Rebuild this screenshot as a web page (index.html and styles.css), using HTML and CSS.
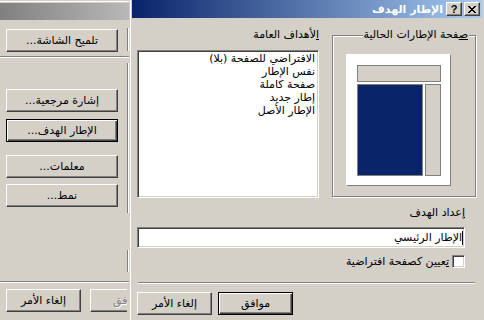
FILE: index.html
```html
<!DOCTYPE html>
<html lang="ar">
<head>
    <meta charset="UTF-8">
    <title>الإطار الهدف</title>
    <link rel="stylesheet" href="styles.css">
</head>
<body>
    <div class="desk">
        <!-- dialog behind -->
        <div class="back-win">
            <div class="back-title"></div>
            <div class="back-body">
                <div class="back-col">
                    <button class="btn bbtn b1">تلميح الشاشة...</button>
                    <div class="sep sep1"></div>
                    <button class="btn bbtn b2">إشارة مرجعية...</button>
                    <button class="btn btn-default bbtn b3">الإطار الهدف...</button>
                    <button class="btn bbtn b4">معلمات...</button>
                    <button class="btn bbtn b5">نمط...</button>
                    <div class="sep sep2"></div>
                    <div class="back-actions">
                        <button class="btn abtn">إلغاء الأمر</button>
                        <button class="btn abtn muted">موافق</button>
                    </div>
                </div>
                <div class="back-edge">
                    <div class="edge-seg e1"></div>
                    <div class="edge-sep s1"></div>
                    <div class="edge-seg e2"></div>
                    <div class="edge-seg e3"></div>
                    <div class="edge-sep s2"></div>
                </div>
            </div>
        </div>

        <!-- target frame dialog -->
        <div class="front-win">
            <div class="front-title">
                <span class="tbtn">
                    <svg width="8" height="7" viewBox="0 0 8 7" shape-rendering="crispEdges">
                        <path d="M0 0h2v1H0zM6 0h2v1H6zM1 1h2v1H1zM5 1h2v1H5zM2 2h4v1H2zM3 3h2v1H3zM2 4h4v1H2zM1 5h2v1H1zM5 5h2v1H5zM0 6h2v1H0zM6 6h2v1H6z" fill="#000"/>
                    </svg>
                </span>
                <span class="tbtn help">?</span>
                <span class="title-text">الإطار الهدف</span>
            </div>

            <div class="front-body">
                <div class="top">
                    <div class="group">
                        <div class="group-title"><u>ص</u>فحة الإطارات الحالية</div>
                        <div class="group-box">
                            <div class="page">
                                <div class="pg-top"></div>
                                <div class="pg-row">
                                    <div class="pg-main"></div>
                                    <div class="pg-side"></div>
                                </div>
                            </div>
                        </div>
                    </div>

                    <div class="targets">
                        <div class="lbl"><u>ا</u>لأهداف العامة</div>
                        <div class="listbox">
                            <div>الافتراضي للصفحة (بلا)</div>
                            <div>نفس الإطار</div>
                            <div>صفحة كاملة</div>
                            <div>إطار جديد</div>
                            <div>الإطار الأصل</div>
                        </div>
                    </div>
                </div>

                <div class="setting">
                    <div class="lbl"><u>إ</u>عداد الهدف</div>
                    <div class="input"><span class="caret"></span>الإطار الرئيسي</div>
                    <div class="check-row">
                        <span class="check"></span>
                        <span><u>ت</u>عيين كصفحة افتراضية</span>
                    </div>
                </div>

                <div class="sep front-sep"></div>

                <div class="actions">
                    <button class="btn btn-default abtn">موافق</button>
                    <button class="btn abtn">إلغاء الأمر</button>
                </div>
            </div>
        </div>
    </div>
</body>
</html>
```

FILE: styles.css
```css
/* Reset */
* {
    margin: 0;
    padding: 0;
    box-sizing: border-box;
}

html, body {
    width: 484px;
    height: 320px;
    overflow: hidden;
}

body {
    background: #d4d0c8;
    color: #000;
    font-family: "DejaVu Sans", sans-serif;
    font-size: 11px;
    line-height: 13px;
}

u {
    text-decoration: underline;
}

.desk {
    display: flex;
    direction: ltr;
    height: 320px;
}

/* classic 3d button */
.btn {
    display: flex;
    align-items: center;
    justify-content: center;
    direction: rtl;
    height: 23px;
    background: #d4d0c8;
    border: 1px solid;
    border-color: #fff #404040 #404040 #fff;
    box-shadow: inset -1px -1px #808080;
    font: inherit;
    color: #000;
    flex: none;
}

.btn-default {
    border: 1px solid #000;
    box-shadow: inset 1px 1px #fff, inset -1px -1px #404040, inset -2px -2px #808080;
}

.abtn {
    width: 75px;
}

.sep {
    height: 2px;
    border-top: 1px solid #808080;
    border-bottom: 1px solid #fff;
}

/* back dialog */
.back-win {
    width: 129px;
    flex: none;
    padding-top: 3px;
    box-shadow: inset 0 1px #d4d0c8, inset 0 2px #fff;
    overflow: hidden;
}

.back-title {
    height: 17px;
    background: linear-gradient(to right, #808080, #b8b8b8);
}

.back-body {
    display: flex;
}

.back-col {
    width: 127px;
    display: flex;
    flex-direction: column;
    overflow: hidden;
}

.bbtn {
    width: 112px;
    margin-left: 6px;
}

.b1 { margin-top: 9px; }
.sep1 { margin-top: 4px; }
.b2 { margin-top: 31px; }
.b3 { margin-top: 7px; }
.b4 { margin-top: 13px; }
.b5 { margin-top: 6px; }
.sep2 { margin-top: 74px; }

.back-actions {
    display: flex;
    gap: 9px;
    margin-top: 6px;
    padding-left: 6px;
}

.muted {
    color: #808080;
    text-shadow: 1px 1px #fff;
}

.back-edge {
    width: 2px;
    display: flex;
    flex-direction: column;
}

.edge-seg {
    border-left: 1px solid #808080;
    border-right: 1px solid #fff;
}

.edge-sep {
    height: 2px;
    border-top: 1px solid #808080;
    border-bottom: 1px solid #fff;
}

.e1 { margin-top: 8px; height: 23px; }
.s1 { margin-top: 5px; }
.e2 { margin-top: 5px; height: 150px; }
.e3 { margin-top: 37px; height: 22px; }
.s2 { margin-top: 9px; }

/* front dialog */
.front-win {
    width: 355px;
    flex: none;
    direction: rtl;
    border-left: 1px solid #d4d0c8;
    box-shadow: inset 1px 0 #fff;
    padding: 0 2px;
}

.front-title {
    height: 18px;
    display: flex;
    align-items: center;
    padding-right: 2px;
    background: linear-gradient(to right, #0a246a, #a6caf0);
    color: #fff;
    font-weight: bold;
}

.tbtn {
    width: 16px;
    height: 14px;
    display: flex;
    align-items: center;
    justify-content: center;
    background: #d4d0c8;
    border: 1px solid;
    border-color: #fff #404040 #404040 #fff;
    box-shadow: inset -1px -1px #808080;
    color: #000;
}

.help {
    margin-right: 2px;
    font-family: "Liberation Sans", sans-serif;
    font-size: 11px;
    font-weight: bold;
}

.title-text {
    margin-right: 3px;
}

.front-body {
    padding: 0 6px 0 5px;
}

.top {
    display: flex;
    justify-content: space-between;
    margin-top: 10px;
}

.group {
    width: 144px;
    display: flex;
    flex-direction: column;
    align-items: flex-start;
}

.group-title {
    position: relative;
    z-index: 1;
    margin-right: 7px;
    margin-bottom: -6px;
    padding: 0 1px;
    background: #d4d0c8;
}

.group-box {
    width: 144px;
    height: 162px;
    direction: ltr;
    border: 1px solid #808080;
    box-shadow: inset 1px 1px #fff, 1px 1px #fff;
    padding: 18px 0 0 13px;
}

.page {
    width: 104px;
    height: 131px;
    background: #fff;
    box-shadow: 1px 1px #808080;
    padding: 11px 0 0 11px;
}

.pg-top {
    width: 84px;
    height: 17px;
    background: #d4d0c8;
    border: 1px solid #808080;
}

.pg-row {
    display: flex;
    gap: 2px;
    margin-top: 2px;
    height: 92px;
}

.pg-main {
    width: 66px;
    background: #0a246a;
    border: 1px solid #808080;
}

.pg-side {
    width: 16px;
    background: #d4d0c8;
    border: 1px solid #808080;
}

.targets {
    width: 182px;
    display: flex;
    flex-direction: column;
}

.listbox,
.input,
.check {
    background: #fff;
    border: 1px solid;
    border-color: #808080 #fff #fff #808080;
    box-shadow: inset 1px 1px #404040, inset -1px -1px #d4d0c8;
}

.listbox {
    height: 148px;
    margin-top: 9px;
    padding: 1px 3px 0 0;
}

.setting {
    margin: 8px 11px 0 0;
}

.input {
    height: 21px;
    margin-top: 8px;
    display: flex;
    align-items: center;
    padding-right: 1px;
}

.caret {
    width: 1px;
    height: 14px;
    background: #000;
}

.check-row {
    display: flex;
    align-items: center;
    gap: 3px;
    margin-top: 7px;
    height: 13px;
}

.check {
    width: 13px;
    height: 13px;
    flex: none;
}

.front-sep {
    margin: 14px 1px 0 1px;
}

.actions {
    display: flex;
    justify-content: flex-end;
    gap: 6px;
    margin-top: 8px;
}
```
